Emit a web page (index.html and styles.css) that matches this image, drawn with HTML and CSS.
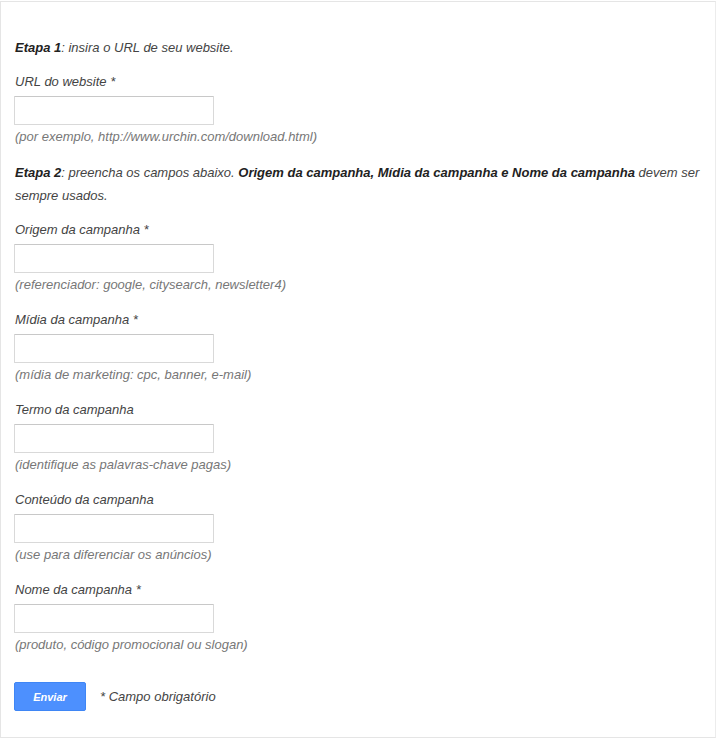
FILE: index.html
```html
<!DOCTYPE html>
<html lang="pt-BR">
<head>
    <meta charset="UTF-8">
    <meta name="viewport" content="width=device-width, initial-scale=1.0">
    <title>Criador de URL</title>
    <link rel="stylesheet" href="styles.css">
</head>
<body>
    <form class="panel" onsubmit="return false">
        <p class="step"><b>Etapa 1</b>: insira o URL de seu website.</p>

        <div class="field">
            <label for="url">URL do website *</label>
            <input type="text" id="url">
            <span class="hint">(por exemplo, http://www.urchin.com/download.html)</span>
        </div>

        <p class="step"><b>Etapa 2</b>: preencha os campos abaixo. <b>Origem da campanha, Mídia da campanha e Nome da campanha</b> devem ser sempre usados.</p>

        <div class="field">
            <label for="source">Origem da campanha *</label>
            <input type="text" id="source">
            <span class="hint">(referenciador: google, citysearch, newsletter4)</span>
        </div>

        <div class="field">
            <label for="medium">Mídia da campanha *</label>
            <input type="text" id="medium">
            <span class="hint">(mídia de marketing: cpc, banner, e-mail)</span>
        </div>

        <div class="field">
            <label for="term">Termo da campanha</label>
            <input type="text" id="term">
            <span class="hint">(identifique as palavras-chave pagas)</span>
        </div>

        <div class="field">
            <label for="content">Conteúdo da campanha</label>
            <input type="text" id="content">
            <span class="hint">(use para diferenciar os anúncios)</span>
        </div>

        <div class="field">
            <label for="name">Nome da campanha *</label>
            <input type="text" id="name">
            <span class="hint">(produto, código promocional ou slogan)</span>
        </div>

        <div class="actions">
            <button type="submit">Enviar</button>
            <span class="required">* Campo obrigatório</span>
        </div>
    </form>
</body>
</html>
```

FILE: styles.css
```css
body {
    margin: 0;
    font-family: "Liberation Sans", Arial, sans-serif;
    font-size: 13px;
    font-style: italic;
    color: #444;
}
.panel {
    box-sizing: border-box;
    width: 716px;
    height: 737px;
    margin-top: 1px;
    padding: 34px 13px 0 13px;
    border: 1px solid #e5e5e5;
    border-right-color: #ececec;
}
.step {
    margin: 0 0 14px 1px;
    line-height: 23px;
}
.field + .step {
    margin-top: -2px;
}
.step b {
    color: #222;
}
.field {
    display: flex;
    flex-direction: column;
    align-items: flex-start;
    margin-bottom: 17px;
}
.field label {
    margin-left: 1px;
    line-height: 18px;
}
.field input {
    box-sizing: border-box;
    width: 200px;
    height: 29px;
    margin: 5px 0 0 0;
    border: 1px solid #d9d9d9;
    border-top-color: #c8c8c8;
    border-radius: 1px;
    font: inherit;
}
.hint {
    margin: 3px 0 0 1px;
    line-height: 18px;
    color: #777;
}
.actions {
    display: flex;
    align-items: center;
    gap: 14px;
    margin-top: 28px;
}
button {
    width: 72px;
    height: 29px;
    background-color: #4d90fe;
    border: 1px solid #3f86f5;
    border-radius: 2px;
    color: #fff;
    font-family: "Liberation Sans", Arial, sans-serif;
    font-size: 11px;
    font-weight: bold;
    font-style: italic;
    cursor: pointer;
}
.required {
    color: #444;
}
```
